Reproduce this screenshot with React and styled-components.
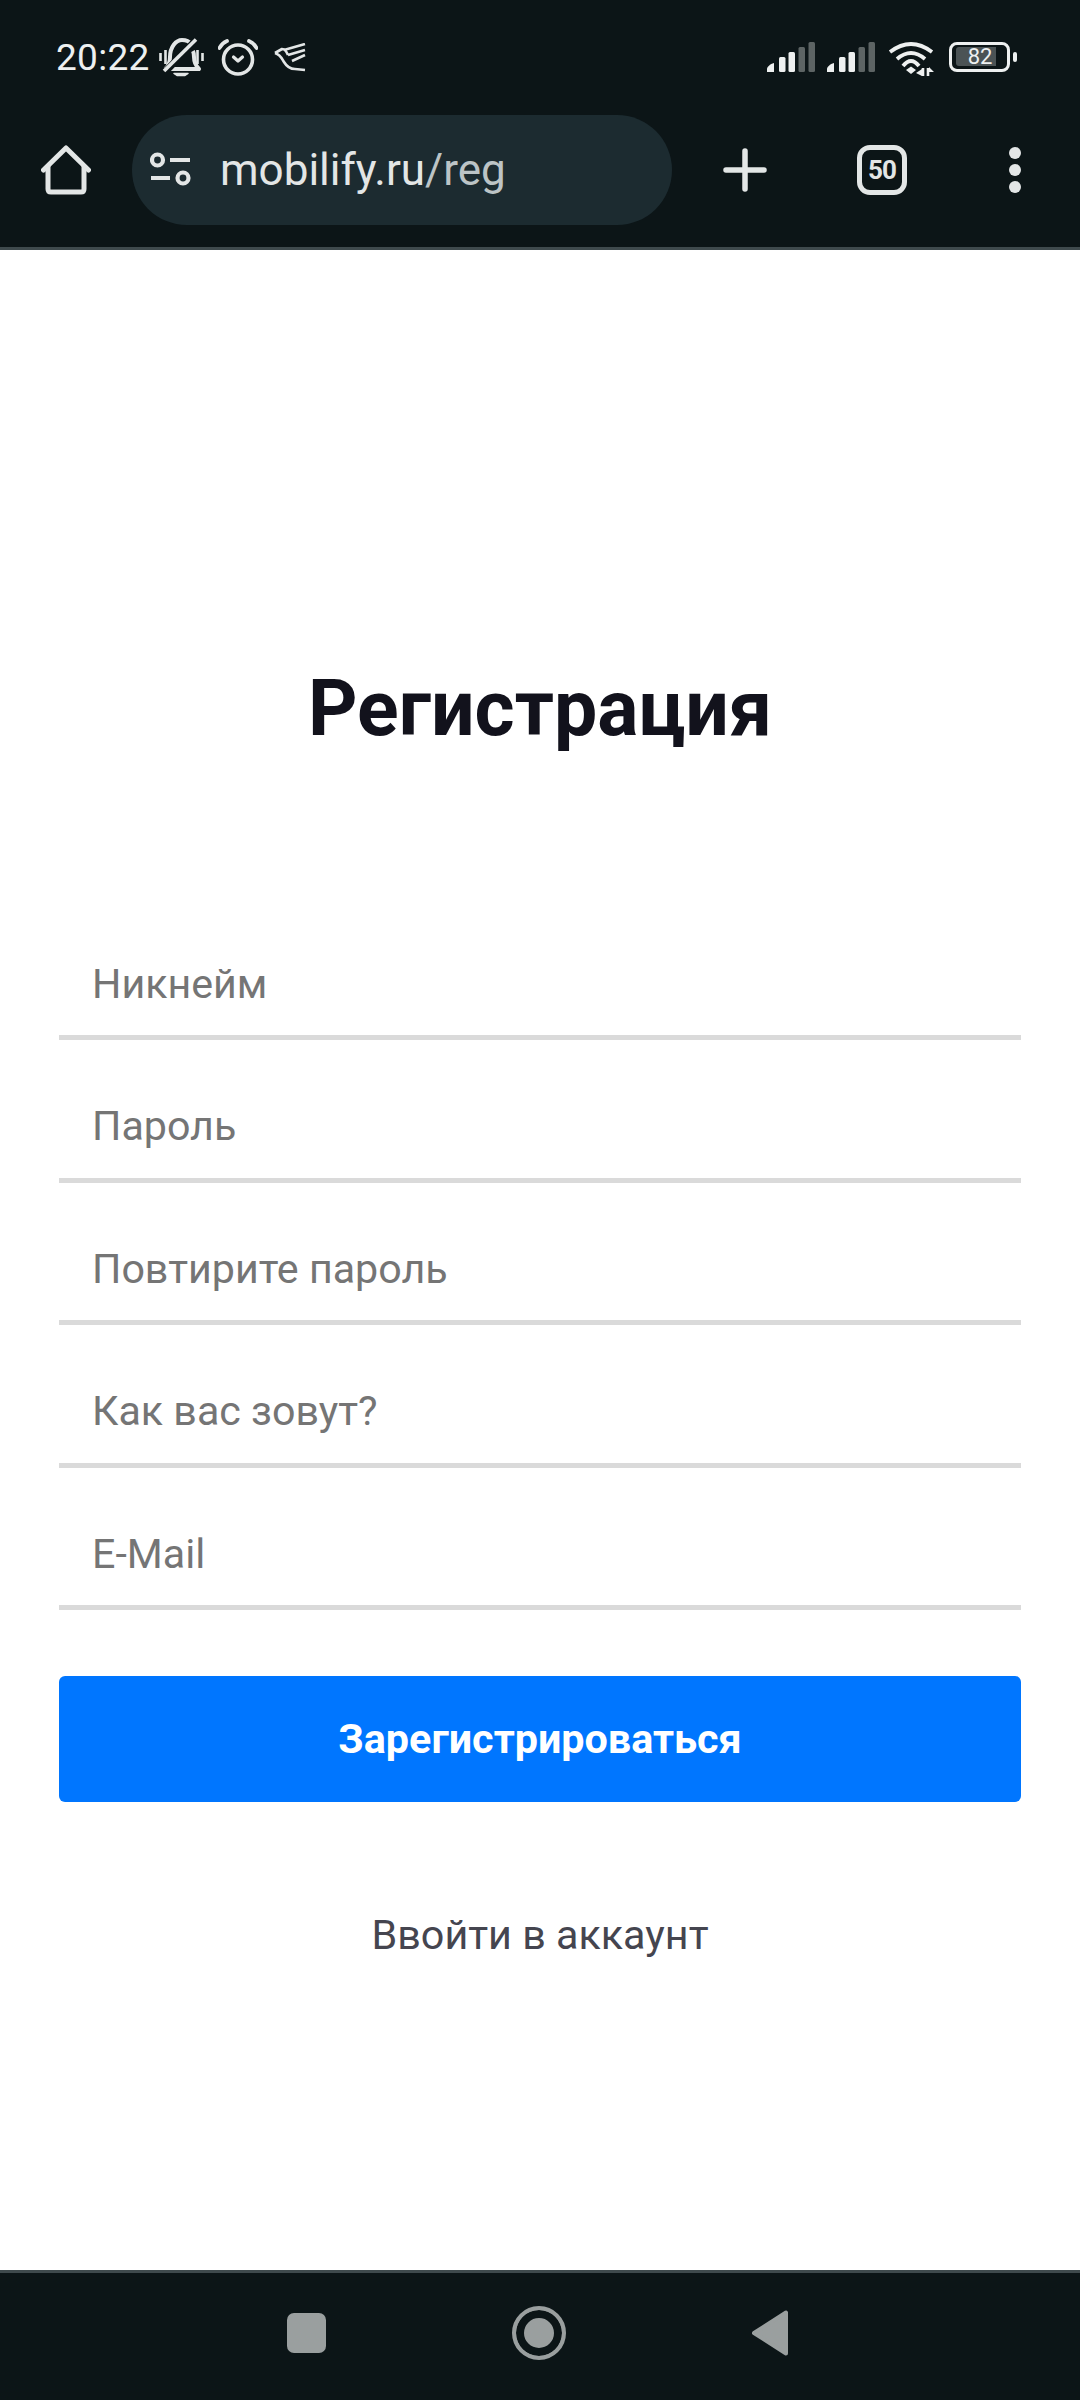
import React from "react";
import styled, { createGlobalStyle } from "styled-components";

const GlobalStyle = createGlobalStyle`
    html, body {
        margin: 0;
        padding: 0;
        background: #ffffff;
    }
    * {
        box-sizing: border-box;
    }
`;

const fields = ["Никнейм", "Пароль", "Повтирите пароль", "Как вас зовут?", "E-Mail"];

const BellOff = () => (
    <svg width="46" height="40" viewBox="0 0 46 40" fill="none" stroke="#e3e6e6" strokeWidth="4">
        <path d="M6 31c4-3 5-6 5-12C11 9 17 2 23 2c4 0 7 1 9 4" />
        <path d="M34 13c1 2 1 4 1 6 0 6 2 9 5 12H6" strokeLinejoin="round" />
        <path d="M15 35.5h14l-3 2h-8z" fill="#e3e6e6" strokeWidth="1.5" strokeLinejoin="round" />
        <path d="M38 1 7 33" stroke="#0c1517" strokeWidth="7" />
        <path d="M37 1.5 5 33" strokeWidth="3.6" />
        <path d="M1.500 15v8M6.500 12v14M38.500 12v14M43.500 15v8" strokeWidth="2.6" />
    </svg>
);

const Alarm = () => (
    <svg width="40" height="38" viewBox="0 0 40 38" fill="none" stroke="#e3e6e6">
        <circle cx="20" cy="20.500" r="14.500" strokeWidth="3.6" />
        <path d="M15.500 18l4.500 4 4.500-4" strokeWidth="3.200" strokeLinecap="round" strokeLinejoin="round" />
        <path d="M1.500 9Q4 4 9 2M38.500 9Q36 4 31 2" strokeWidth="3.800" strokeLinecap="round" />
    </svg>
);

const Bird = () => (
    <svg width="32" height="30" viewBox="0 0 32 30" fill="none" stroke="#e3e6e6" strokeWidth="2.600">
        <path d="M1 10l7-4c3 0 4 2 6 6" strokeLinejoin="round" />
        <path d="M1 10c6 2 7 6 9 9 3 5 7 7 11 7l10 1" />
        <path d="M10 7 31 1M14 12 31 7M18 18 31 12" />
    </svg>
);

const Signal = () => (
    <svg width="48" height="32" viewBox="0 0 48 32">
        <path d="M0 31v-3c0-2 3-5 7-6v9z" fill="#eef0f0" />
        <rect x="12" y="16" width="6.500" height="15" rx="1.500" fill="#eef0f0" />
        <rect x="21.500" y="11" width="6.500" height="20" rx="1.500" fill="#eef0f0" />
        <rect x="31.500" y="6" width="6.500" height="25" rx="1.500" fill="#5d6464" />
        <rect x="41.500" y="1" width="6.500" height="30" rx="1.500" fill="#5d6464" />
    </svg>
);

const Wifi = () => (
    <svg width="48" height="36" viewBox="0 0 48 36" fill="none" stroke="#eef0f0" strokeWidth="3.800">
        <path d="M3 11Q24-5 45 11" />
        <path d="M10 18Q24 6 38 18" />
        <path d="M16 25Q24 15 32 25" />
        <path d="M19 29l5-3.500 5 3.500-5 4z" fill="#eef0f0" strokeWidth="0" />
        <path d="M36 27v8M41 27v8" strokeWidth="2.600" />
        <path d="M29 32l6-4v7zM42 26l5 5h-5z" fill="#eef0f0" strokeWidth="0" />
    </svg>
);

const HomeIcon = () => (
    <svg width="50" height="50" viewBox="0 0 50 50" fill="none" stroke="#e3e6e6" strokeWidth="5" strokeLinejoin="round">
        <path d="M2.500 25 25 3l22.500 22" strokeLinecap="round" />
        <path d="M7 21v23c0 2 1 3 3 3h30c2 0 3-1 3-3V21" />
    </svg>
);

const TuneIcon = () => (
    <svg width="42" height="36" viewBox="0 0 42 36" fill="none" stroke="#e3e6e6" strokeWidth="4.200">
        <circle cx="7.500" cy="8" r="5.500" />
        <path d="M20 8h20M1 26h19" />
        <circle cx="33" cy="26" r="5.500" />
    </svg>
);

const PlusIcon = () => (
    <svg width="44" height="44" viewBox="0 0 44 44" stroke="#e3e6e6" strokeWidth="5.500" strokeLinecap="round">
        <path d="M22 3v38M3 22h38" />
    </svg>
);

const BackIcon = () => (
    <svg width="36" height="46" viewBox="0 0 36 46" fill="#9a9f9f" stroke="#9a9f9f" strokeWidth="4" strokeLinejoin="round">
        <path d="M34 2.500v41L2 23z" />
    </svg>
);

export default function App() {
    return (
        <Page>
            <GlobalStyle />
            <Header>
                <StatusBar>
                    <StatusLeft>
                        <Time>20:22</Time>
                        <BellOff />
                        <Alarm />
                        <Bird />
                    </StatusLeft>
                    <StatusRight>
                        <Signal />
                        <Signal />
                        <Wifi />
                        <Battery>
                            <BatteryLevel>82</BatteryLevel>
                        </Battery>
                    </StatusRight>
                </StatusBar>
                <Toolbar>
                    <HomeIcon />
                    <UrlPill>
                        <TuneIcon />
                        <UrlText>mobilify.ru<UrlPath>/reg</UrlPath></UrlText>
                    </UrlPill>
                    <PlusIcon />
                    <TabCount>50</TabCount>
                    <Dots>
                        <i /><i /><i />
                    </Dots>
                </Toolbar>
            </Header>
            <Main>
                <Title>Регистрация</Title>
                <Form>
                    {fields.map((field) => (
                        <Field key={field} placeholder={field} />
                    ))}
                    <SubmitButton type="button">Зарегистрироваться</SubmitButton>
                </Form>
                <LoginLink>Ввойти в аккаунт</LoginLink>
            </Main>
            <NavBar>
                <NavSquare />
                <NavHome />
                <BackIcon />
            </NavBar>
        </Page>
    );
}

const Page = styled.div`
    width: 1080px;
    height: 2400px;
    display: flex;
    flex-direction: column;
    overflow: hidden;
    font-family: Roboto, "Noto Sans", sans-serif;
    background: #ffffff;
`;

const Header = styled.header`
    height: 250px;
    background: #0c1517;
    border-bottom: 3px solid #3f4a4d;
    display: flex;
    flex-direction: column;
`;

const StatusBar = styled.div`
    height: 115px;
    padding: 38px 63px 0 56px;
    display: flex;
    justify-content: space-between;
    align-items: flex-start;
`;

const StatusLeft = styled.div`
    display: flex;
    align-items: center;
    gap: 13px;
    svg:last-child {
        margin-left: 3px;
    }
`;

const Time = styled.span`
    margin-right: -4px;
    color: #eef0f0;
    font-size: 37px;
    line-height: 40px;
    letter-spacing: 0.3px;
`;

const StatusRight = styled.div`
    display: flex;
    align-items: flex-start;
    gap: 12px;
    padding-top: 3px;
`;

const Battery = styled.div`
    position: relative;
    width: 61px;
    height: 30px;
    margin: 1px 7px 0 2px;
    padding: 2px 4px;
    border: 3px solid #eef0f0;
    border-radius: 8px;
    &::after {
        content: "";
        position: absolute;
        right: -10px;
        top: 7px;
        width: 4px;
        height: 10px;
        border-radius: 2px;
        background: #eef0f0;
    }
`;

const BatteryLevel = styled.div`
    width: 40px;
    height: 19px;
    padding-left: 8px;
    background: #4b5355;
    border-radius: 3px 0 0 3px;
    color: #eef0f0;
    font-size: 22px;
    line-height: 20px;
    text-align: center;
    white-space: nowrap;
`;

const Toolbar = styled.div`
    display: flex;
    align-items: center;
    padding-left: 41px;
`;

const UrlPill = styled.div`
    width: 540px;
    height: 110px;
    margin: 0 51px 0 41px;
    padding-left: 18px;
    display: flex;
    align-items: center;
    gap: 28px;
    border-radius: 55px;
    background: #1c2b30;
`;

const UrlText = styled.span`
    color: #e3e6e6;
    font-size: 44px;
`;

const UrlPath = styled.span`
    color: #bcc4c6;
`;

const TabCount = styled.div`
    width: 50px;
    height: 50px;
    margin-left: 90px;
    border: 5px solid #e3e6e6;
    border-radius: 13px;
    color: #e3e6e6;
    font-size: 26px;
    font-weight: 700;
    letter-spacing: -1px;
    line-height: 40px;
    text-align: center;
`;

const Dots = styled.div`
    margin-left: 102px;
    display: flex;
    flex-direction: column;
    gap: 5px;
    i {
        display: block;
        width: 12px;
        height: 12px;
        border-radius: 50%;
        background: #e3e6e6;
    }
`;

const Main = styled.main`
    flex: 1;
    display: flex;
    flex-direction: column;
    padding: 417px 59px 0;
`;

const Title = styled.h1`
    margin: 0 0 146.500px;
    color: #12121c;
    font-size: 77px;
    line-height: 84px;
    font-weight: 700;
    text-align: center;
`;

const Form = styled.form`
    display: flex;
    flex-direction: column;
`;

const Field = styled.input`
    width: 100%;
    height: 142.500px;
    padding: 35px 33px 0;
    border: none;
    border-bottom: 5px solid #dadada;
    outline: none;
    background: transparent;
    font-family: inherit;
    font-size: 41.200px;
    &::placeholder {
        color: #757575;
        opacity: 1;
    }
`;

const SubmitButton = styled.button`
    height: 126px;
    margin-top: 66px;
    border: none;
    border-radius: 6px;
    background: #0076ff;
    color: #ffffff;
    font-family: inherit;
    font-size: 41.300px;
    font-weight: 700;
`;

const LoginLink = styled.a`
    margin-top: 109px;
    color: #45454f;
    font-size: 41.300px;
    line-height: 48px;
    text-align: center;
`;

const NavBar = styled.nav`
    height: 130px;
    padding: 0 0 8px 287px;
    border-top: 3px solid #3f4a4d;
    background: #0c1517;
    display: flex;
    align-items: center;
    gap: 186px;
`;

const NavSquare = styled.div`
    width: 39px;
    height: 40px;
    border-radius: 7px;
    background: #9a9f9f;
`;

const NavHome = styled.div`
    width: 54px;
    height: 54px;
    border: 4px solid #9a9f9f;
    border-radius: 50%;
    background: #9a9f9f;
    box-shadow: inset 0 0 0 8px #0c1517;
`;
